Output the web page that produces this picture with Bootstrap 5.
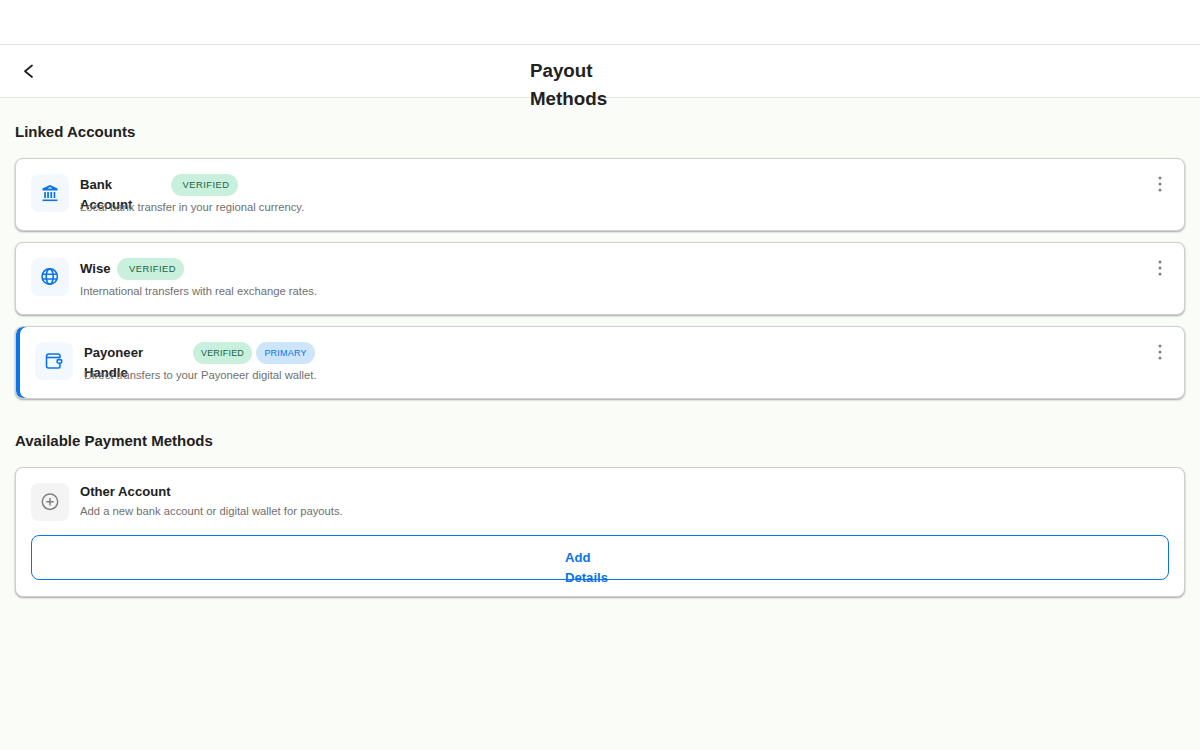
<!DOCTYPE html>
<html lang="en">
<head>
    <meta charset="UTF-8">
    <title>Payout Methods</title>
    <link href="https://cdn.jsdelivr.net/npm/bootstrap@5.3.0/dist/css/bootstrap.min.css" rel="stylesheet">
    <style>
        body {
            font-family: "Liberation Sans", Arial, sans-serif;
            background-color: #fafcf7;
            color: #212121;
            height: 750px;
            overflow: hidden;
        }
        .top-strip { height: 45px; background: #fff; border-bottom: 1px solid #e2e2e2; }
        .page-head {
            display: grid;
            grid-template-columns: 1fr 140px 1fr;
            height: 53px;
            background: #fff;
            border-bottom: 1px solid #e4e4e4;
        }
        .back-btn { padding: 14px 0 0 20px; line-height: 0; }
        .page-title {
            font-size: 18.75px;
            line-height: 28px;
            font-weight: 700;
            margin: 12px 0 0;
            width: 80px;
            height: 28px;
        }
        .content-wrap { padding: 23px 15px 0; }
        .sec-title { font-size: 15px; line-height: 22px; font-weight: 700; margin: 0 0 15px; }
        .sec-gap { margin-top: 31px; }
        .pay-card {
            background: #fff;
            border: 1px solid #cfcfcf;
            border-radius: 8px;
            box-shadow: 0 1px 2px rgba(0,0,0,.35);
            padding: 15px;
            margin-bottom: 11px;
            height: 73px;
        }
        .pay-card.is-primary { box-shadow: inset 4px 0 0 #0a74e8, 0 1px 2px rgba(0,0,0,.35); padding-left: 19px; }
        .pay-card.add-card { height: 130px; margin-top: 15px; }
        .icon-tile {
            width: 38px;
            height: 38px;
            border-radius: 8px;
            background: #f3f8fe;
            flex: none;
            margin-right: 11px;
            color: #0a74e8;
        }
        .icon-tile.muted-tile { background: #f4f4f4; color: #808080; }
        .acct-name { font-size: 13.125px; line-height: 20px; font-weight: 700; height: 20px; padding-top: 1px; }
        .acct-name.plain-name { padding-top: 0; margin-top: -1px; }
        .name-bank { width: 83px; }
        .name-payoneer { width: 101px; }
        .name-row { gap: 7px; }
        .name-row .name-bank { margin-right: 1px; }
        .acct-desc { font-size: 11.25px; line-height: 18px; color: #6f6f6f; margin-top: 2px; white-space: nowrap; }
        .acct-desc.plain-desc { margin-top: 0; }
        .pill {
            height: 22px;
            line-height: 22px;
            border-radius: 11px;
            font-size: 9.375px;
            letter-spacing: .47px;
            text-align: center;
        }
        .pill-green { background: #c8f0dd; color: #1c6344; width: 67px; padding-left: 3px; }
        .pill-blue { background: #cde5fb; color: #0a74e8; }
        .pill-tight { width: 59px; padding-left: 0; font-size: 9px; letter-spacing: .2px; }
        .dots-col { color: #808080; line-height: 0; margin-top: 1px; margin-right: 6px; }
        .add-btn {
            width: 100%;
            height: 45px;
            margin-top: 14px;
            padding: 0;
            background: #fff;
            border: 1px solid #0a74e8;
            border-radius: 8px;
            color: #0a74e8;
            font-size: 13.125px;
            line-height: 20px;
            font-weight: 700;
        }
        .add-label { display: block; width: 70px; height: 20px; margin: 0 auto; text-align: left; }
        .add-label-inner { display: block; width: 50px; }
    </style>
</head>
<body>

<div class="top-strip"></div>

<div class="page-head">
    <div class="back-btn">
        <svg width="16" height="24" viewBox="0 0 16 24" fill="none" stroke="#212121" stroke-width="1.8" stroke-linecap="round" stroke-linejoin="round"><path d="M12 6.5 L5 12.2 L12 18"/></svg>
    </div>
    <h1 class="page-title">Payout Methods</h1>
    <div></div>
</div>

<div class="content-wrap">
    <h2 class="sec-title">Linked Accounts</h2>

    <div class="pay-card d-flex">
        <div class="icon-tile d-flex align-items-center justify-content-center">
            <svg width="18" height="18" viewBox="0 0 18 18" fill="currentColor"><path fill-rule="evenodd" d="M9 1 L16.5 4.6 V6.5 H1.5 V4.6 Z M9 3 L6.5 4.6 H11.5 Z"/><rect x="3.2" y="8" width="1.7" height="6"/><rect x="6.2" y="8" width="1.7" height="6"/><rect x="9.4" y="8" width="1.7" height="6"/><rect x="12.6" y="8" width="1.7" height="6"/><rect x="1.5" y="15.5" width="15" height="1.6"/></svg>
        </div>
        <div class="flex-grow-1">
            <div class="d-flex align-items-start name-row">
                <div class="acct-name name-bank">Bank Account</div>
                <span class="pill pill-green">VERIFIED</span>
            </div>
            <div class="acct-desc">Local bank transfer in your regional currency.</div>
        </div>
        <div class="dots-col"><svg width="6" height="18" viewBox="0 0 6 18" fill="currentColor"><circle cx="3" cy="3" r="1.5"/><circle cx="3" cy="9" r="1.5"/><circle cx="3" cy="15" r="1.5"/></svg></div>
    </div>

    <div class="pay-card d-flex">
        <div class="icon-tile d-flex align-items-center justify-content-center">
            <svg width="20" height="20" viewBox="0 0 20 20" fill="none" stroke="currentColor" stroke-width="1.6"><circle cx="9.7" cy="9.6" r="7.7"/><ellipse cx="9.7" cy="9.6" rx="3.5" ry="7.7"/><path d="M2.4 7.2 H17 M2.4 12 H17"/></svg>
        </div>
        <div class="flex-grow-1">
            <div class="d-flex align-items-start name-row">
                <div class="acct-name">Wise</div>
                <span class="pill pill-green">VERIFIED</span>
            </div>
            <div class="acct-desc">International transfers with real exchange rates.</div>
        </div>
        <div class="dots-col"><svg width="6" height="18" viewBox="0 0 6 18" fill="currentColor"><circle cx="3" cy="3" r="1.5"/><circle cx="3" cy="9" r="1.5"/><circle cx="3" cy="15" r="1.5"/></svg></div>
    </div>

    <div class="pay-card is-primary d-flex">
        <div class="icon-tile d-flex align-items-center justify-content-center">
            <svg width="18" height="18" viewBox="0 0 18 18" fill="none" stroke="currentColor" stroke-width="1.6" stroke-linejoin="round"><path d="M15 6 V4.2 C15 3 14.2 2 13 2 H4 C2.6 2 1.5 3 1.5 4.5 V14 C1.5 15.2 2.4 16 3.5 16 H13.5 C14.5 16 15 15.2 15 14.4 V12"/><path d="M1.8 5.5 H15"/><rect x="12" y="7.6" width="4.8" height="3.6" rx="1.6"/></svg>
        </div>
        <div class="flex-grow-1">
            <div class="d-flex align-items-start">
                <div class="acct-name name-payoneer">Payoneer Handle</div>
                <span class="pill pill-green pill-tight ms-2">VERIFIED</span>
                <span class="pill pill-blue pill-tight ms-1">PRIMARY</span>
            </div>
            <div class="acct-desc">Direct transfers to your Payoneer digital wallet.</div>
        </div>
        <div class="dots-col"><svg width="6" height="18" viewBox="0 0 6 18" fill="currentColor"><circle cx="3" cy="3" r="1.5"/><circle cx="3" cy="9" r="1.5"/><circle cx="3" cy="15" r="1.5"/></svg></div>
    </div>

    <h2 class="sec-title sec-gap">Available Payment Methods</h2>

    <div class="pay-card add-card">
        <div class="d-flex">
            <div class="icon-tile muted-tile d-flex align-items-center justify-content-center">
                <svg width="20" height="20" viewBox="0 0 20 20" fill="none" stroke="currentColor" stroke-width="1.5"><circle cx="10" cy="9.7" r="7.7"/><path d="M10 6 V13.4 M6.3 9.7 H13.7"/></svg>
            </div>
            <div>
                <div class="acct-name plain-name">Other Account</div>
                <div class="acct-desc plain-desc">Add a new bank account or digital wallet for payouts.</div>
            </div>
        </div>
        <button type="button" class="add-btn"><span class="add-label"><span class="add-label-inner">Add Details</span></span></button>
    </div>
</div>

<script src="https://cdn.jsdelivr.net/npm/bootstrap@5.3.0/dist/js/bootstrap.bundle.min.js"></script>
</body>
</html>
